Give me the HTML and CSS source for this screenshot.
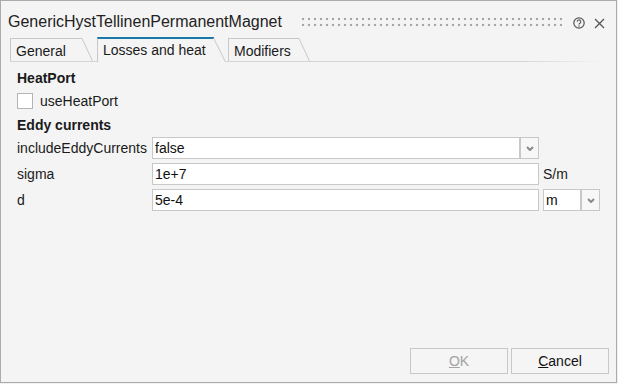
FILE: index.html
```html
<!DOCTYPE html>
<html>
<head>
<meta charset="utf-8">
<link rel="stylesheet" href="styles.css">
</head>
<body>
<div class="window">
  <header class="titlebar">
    <span class="title">GenericHystTellinenPermanentMagnet</span>
    <div class="grip"></div>
    <svg class="help" width="12" height="12" viewBox="0 0 12 12"><circle cx="6" cy="6" r="5.2" fill="none" stroke="#555" stroke-width="1.2"/><path d="M4.2 4.8a1.8 1.8 0 1 1 2.7 1.5c-.6.35-.9.65-.9 1.3" fill="none" stroke="#555" stroke-width="1.1"/><circle cx="6" cy="9.1" r=".75" fill="#555"/></svg>
    <svg class="close" width="11" height="11" viewBox="0 0 11 11"><path d="M1 1l9 9M10 1l-9 9" stroke="#555" stroke-width="1.3"/></svg>
  </header>
  <nav class="tabs">
    <div class="tab">
      <span class="tab-label tab-general">General</span>
      <svg class="slant" width="11" height="23" viewBox="0 0 11 23"><path d="M0 0.5L10.5 23" stroke="#c8c8c8" fill="none"/></svg>
    </div>
    <div class="tab tab-active">
      <span class="tab-label tab-losses">Losses and heat</span>
      <svg class="slant" width="13" height="25" viewBox="0 0 13 25"><path d="M0 0H1L13 25H0Z" fill="#f4f4f4"/><path d="M0 0H1" stroke="#1b79a8" stroke-width="4"/><path d="M0.5 1L12.5 25" stroke="#c8c8c8" fill="none"/></svg>
    </div>
    <div class="tab">
      <span class="tab-label tab-modifiers">Modifiers</span>
      <svg class="slant" width="11" height="23" viewBox="0 0 11 23"><path d="M0 0.5L10.5 23" stroke="#c8c8c8" fill="none"/></svg>
    </div>
  </nav>
  <main class="content">
    <div class="section-title">HeatPort</div>
    <label class="check-row"><span class="checkbox"></span><span>useHeatPort</span></label>
    <div class="section-title section-eddy">Eddy currents</div>
    <div class="params">
      <div class="param-label">includeEddyCurrents</div>
      <div class="combo">
        <div class="field field-combo">false</div>
        <div class="combo-btn"><svg width="8" height="5" viewBox="0 0 8 5"><path d="M1 1l3 3 3-3" stroke="#8a8a8a" stroke-width="2" fill="none"/></svg></div>
      </div>
      <div class="unit"></div>

      <div class="param-label">sigma</div>
      <div class="field">1e+7</div>
      <div class="unit">S/m</div>

      <div class="param-label">d</div>
      <div class="field">5e-4</div>
      <div class="unit">
        <div class="combo">
          <div class="field field-unit">m</div>
          <div class="combo-btn"><svg width="8" height="5" viewBox="0 0 8 5"><path d="M1 1l3 3 3-3" stroke="#8a8a8a" stroke-width="2" fill="none"/></svg></div>
        </div>
      </div>
    </div>
  </main>
  <footer class="footer">
    <button class="btn btn-disabled"><u>O</u>K</button>
    <button class="btn"><u>C</u>ancel</button>
  </footer>
</div>
</body>
</html>
```
FILE: styles.css
```css
html, body {
  margin: 0;
  padding: 0;
  background: #f0f0f0;
}
body {
  font-family: "Liberation Sans", Arial, sans-serif;
  font-size: 14px;
  color: #1a1a1a;
}
.window {
  width: 617px;
  height: 383px;
  box-sizing: border-box;
  border: 1px solid #ababab;
  background: #f4f4f4;
  display: flex;
  flex-direction: column;
}
.titlebar {
  height: 36px;
  box-sizing: border-box;
  display: flex;
  align-items: flex-start;
  padding: 12px 0 0 7px;
}
.title {
  font-size: 16px;
  line-height: 18px;
  color: #222;
  white-space: nowrap;
}
.grip {
  flex: 1;
  height: 12px;
  margin: 3px 0 0 18px;
  background-image: linear-gradient(#f4f4f4, #f4f4f4), linear-gradient(90deg, #a8a8a8 2px, rgba(0,0,0,0) 2px);
  background-image: radial-gradient(circle at 3px 3px, #a6a6a6 1.1px, rgba(166,166,166,0) 1.6px);
  background-size: 6px 6px;
}
.help {
  margin: 4px 0 0 9px;
}
.close {
  margin: 5px 11px 0 9px;
}
.tabs {
  height: 25px;
  display: flex;
  align-items: flex-end;
  padding-left: 9px;
  background-image: linear-gradient(to right, #d4d4d4 0%, #d4d4d4 85%, rgba(212,212,212,0) 100%);
  background-size: calc(100% - 20px) 1px;
  background-position: 9px 100%;
  background-repeat: no-repeat;
}
.tab {
  display: flex;
  height: 23px;
  margin-bottom: 1px;
}
.tab-label {
  box-sizing: border-box;
  border-top: 1px solid #c8c8c8;
  border-left: 1px solid #c8c8c8;
  padding: 2px 0 0 5px;
  line-height: 20px;
  white-space: nowrap;
  color: #1a1a1a;
}
.slant {
  display: block;
}
.tab-general { width: 72px; }
.tab-general + .slant { margin-right: 4px; }
.tab-active {
  height: 25px;
  margin-bottom: 0;
  margin-right: 2px;
}
.tab-active .tab-label {
  border-top: 2px solid #1b79a8;
  padding-top: 1px;
  background: #f4f4f4;
}
.tab-losses { width: 116px; }
.tab-modifiers { width: 71px; }
.content {
  padding: 6px 0 0 16px;
}
.section-title {
  font-weight: bold;
  line-height: 20px;
}
.section-eddy {
  margin-top: 4px;
}
.check-row {
  display: flex;
  align-items: center;
  gap: 7px;
  height: 20px;
  margin-top: 3px;
}
.checkbox {
  width: 16px;
  height: 16px;
  box-sizing: border-box;
  border: 1px solid #b4b4b4;
  background: #fff;
}
.params {
  margin-top: 2px;
  display: grid;
  grid-template-columns: 135px 387px auto;
  grid-auto-rows: 22px;
  row-gap: 4px;
  align-items: center;
}
.param-label {
  line-height: 22px;
  white-space: nowrap;
}
.field {
  height: 22px;
  box-sizing: border-box;
  border: 1px solid #c8c8c8;
  background: #fff;
  padding-left: 2px;
  line-height: 20px;
  color: #111;
}
.combo {
  display: flex;
}
.field-combo { width: 368px; }
.field-unit { width: 38px; }
.combo-btn {
  width: 19px;
  height: 22px;
  box-sizing: border-box;
  border: 1px solid #c8c8c8;
  background: #f7f7f7;
  display: flex;
  align-items: center;
  justify-content: center;
}
.unit {
  padding-left: 4px;
  line-height: 22px;
}
.footer {
  margin-top: auto;
  display: flex;
  justify-content: flex-end;
  gap: 3px;
  padding: 0 7px 8px 0;
}
.btn {
  width: 98px;
  height: 26px;
  box-sizing: border-box;
  border: 1px solid #c8c8c8;
  background: #f5f5f5;
  font-family: "Liberation Sans", Arial, sans-serif;
  font-size: 14px;
  color: #111;
  padding: 0;
}
.btn-disabled {
  color: #a3a3a3;
}
```
